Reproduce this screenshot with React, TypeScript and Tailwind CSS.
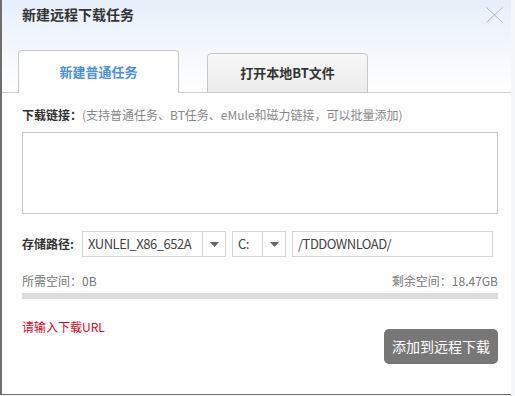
import React from 'react';

const font = { fontFamily: '"Microsoft YaHei", "Noto Sans CJK SC", sans-serif' };

const Caret = () => (
    <svg width="9" height="5" viewBox="0 0 9 5" className="fill-[#666]">
        <path d="M0 0h9L4.5 5z" />
    </svg>
);

const Select: React.FC<{ value: string; className: string; divider: string }> = ({ value, className, divider }) => (
    <div className={`flex h-[26px] border border-[#d5d5d5] bg-white ${className}`}>
        <div className={`flex items-center pl-[5px] text-[13px] tracking-[-0.5px] text-[#444] ${divider} border-r border-[#d5d5d5]`}>{value}</div>
        <div className="flex flex-1 items-center justify-center">
            <Caret />
        </div>
    </div>
);

export default function App() {
    return (
        <div className="w-[515px] h-[396px] bg-[#f6f7f9] overflow-hidden" style={font}>
            <div className="relative w-[511px] h-[395px] border-l-2 border-b border-[#6e6e6e] bg-white flex flex-col">
                {/* header */}
                <div className="h-[93px] bg-gradient-to-b from-[#e6effa] to-white border-b border-[#cfcfcf] flex flex-col">
                    <div className="flex items-start justify-between pl-[20px] pr-[8px] pt-[4px]">
                        <h1 className="text-[14px] font-bold text-[#333] leading-[20px]">新建远程下载任务</h1>
                        <svg width="17" height="16" viewBox="0 0 17 16" className="mt-[3px] stroke-[#b4b4b4]" strokeWidth="1">
                            <path d="M0.5 0.5l16 15M16.5 0.5l-16 15" />
                        </svg>
                    </div>
                    <div className="mt-auto flex items-end gap-[28px] pl-[16px] -mb-px">
                        <div className="w-[161px] h-[43px] bg-white border border-b-0 border-[#c8c8c8] rounded-t-[4px] flex items-center justify-center text-[13px] font-bold text-[#4a90e2]">
                            新建普通任务
                        </div>
                        <div className="w-[161px] h-[40px] bg-gradient-to-b from-[#f7f7f7] to-[#ececec] border border-[#c8c8c8] rounded-t-[4px] flex items-center justify-center text-[13px] font-bold text-[#333]">
                            打开本地BT文件
                        </div>
                    </div>
                </div>

                {/* body */}
                <div className="flex flex-col pl-[20px] pr-[12px]">
                    <div className="mt-[13px] text-[12px] leading-[18px]">
                        <span className="font-bold text-[#333]">下载链接：</span>
                        <span className="text-[#888]">(支持普通任务、BT任务、eMule和磁力链接，可以批量添加)</span>
                    </div>
                    <div className="mt-[8px] w-[476px] h-[82px] border border-[#c9c9c9]"></div>

                    <div className="mt-[17px] flex items-center">
                        <span className="w-[60px] text-[12px] font-bold text-[#333]">存储路径:</span>
                        <Select value="XUNLEI_X86_652A" className="w-[144px]" divider="w-[120px]" />
                        <Select value="C:" className="ml-[6px] w-[54px]" divider="w-[30px]" />
                        <div className="ml-[6px] w-[201px] h-[26px] border border-[#d5d5d5] flex items-center pl-[5px] text-[13px] tracking-[-0.5px] text-[#444]">/TDDOWNLOAD/</div>
                    </div>

                    <div className="mt-[15px] w-[476px] flex justify-between text-[12px] text-[#777] leading-[18px]">
                        <span>所需空间：0B</span>
                        <span>剩余空间：18.47GB</span>
                    </div>
                    <div className="mt-[3px] w-[476px] h-[6px] bg-[#dcdcdc]"></div>

                    <div className="mt-[19px] w-[476px] flex justify-between items-start">
                        <span className="text-[12px] text-[#e6001e] leading-[18px]">请输入下载URL</span>
                        <button className="mt-[11px] w-[114px] h-[35px] rounded-[5px] bg-[#777] text-white text-[14px]">添加到远程下载</button>
                    </div>
                </div>
            </div>
        </div>
    );
}
